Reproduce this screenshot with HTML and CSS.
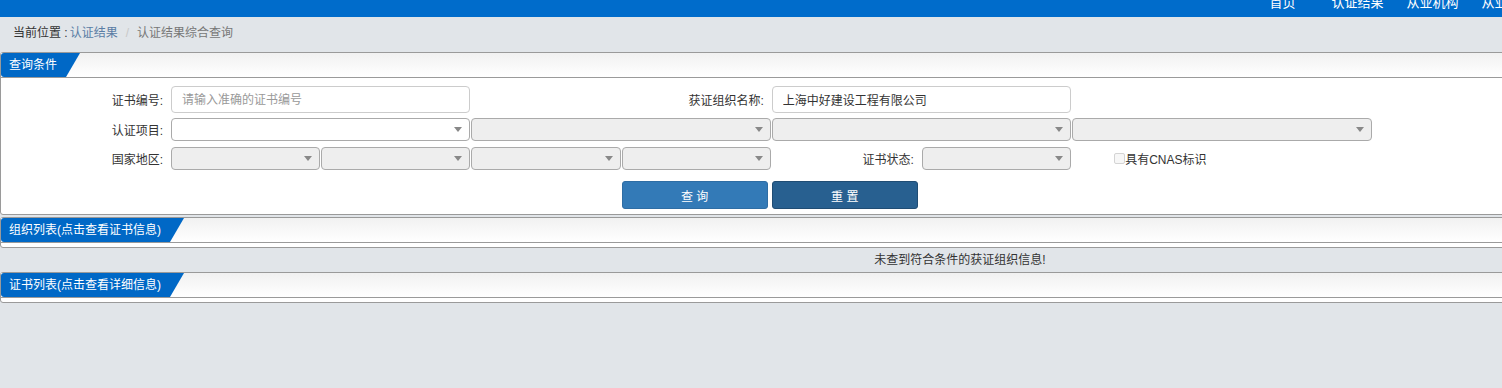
FILE: index.html
```html
<!DOCTYPE html>
<html>
<head>
    <meta charset="utf-8"/>
    <title>认证结果综合查询</title>
    <link rel="stylesheet" href="styles.css">
</head>
<body>
    <div class="topbar">
        <ul class="nav">
            <li>首页</li>
            <li>认证结果</li>
            <li>从业机构</li>
            <li>从业人员</li>
        </ul>
    </div>
    <div class="crumb">
        <span class="here">当前位置 :</span><a class="crumb-link">认证结果</a><span class="sep">/</span><span class="current">认证结果综合查询</span>
    </div>
    <div class="page">
        <div class="panel">
            <div class="panel-head"><span class="tab">查询条件</span></div>
            <div class="panel-body form">
                <div class="row row-1">
                    <label class="lbl">证书编号:</label>
                    <input class="txt span2" type="text" placeholder="请输入准确的证书编号">
                    <label class="lbl span2">获证组织名称:</label>
                    <input class="txt span2" type="text" value="上海中好建设工程有限公司">
                </div>
                <div class="row row-2">
                    <label class="lbl">认证项目:</label>
                    <div class="sel span2 open"><span class="arrow"></span></div>
                    <div class="sel span2"><span class="arrow"></span></div>
                    <div class="sel span2"><span class="arrow"></span></div>
                    <div class="sel span2"><span class="arrow"></span></div>
                </div>
                <div class="row row-3">
                    <label class="lbl">国家地区:</label>
                    <div class="sel"><span class="arrow"></span></div>
                    <div class="sel"><span class="arrow"></span></div>
                    <div class="sel"><span class="arrow"></span></div>
                    <div class="sel"><span class="arrow"></span></div>
                    <label class="lbl">证书状态:</label>
                    <div class="sel"><span class="arrow"></span></div>
                    <label class="check span2"><span class="box"></span>具有CNAS标识</label>
                </div>
                <div class="row row-4">
                    <span class="skip"></span>
                    <button class="btn btn-query">查 询</button>
                    <button class="btn btn-reset">重 置</button>
                </div>
            </div>
        </div>

        <div class="panel">
            <div class="panel-head"><span class="tab">组织列表(点击查看证书信息)</span></div>
            <div class="panel-body empty"></div>
        </div>
        <div class="message">未查到符合条件的获证组织信息!</div>

        <div class="panel">
            <div class="panel-head"><span class="tab">证书列表(点击查看详细信息)</span></div>
            <div class="panel-body empty"></div>
        </div>
    </div>
</body>
</html>
```

FILE: styles.css
```css
body {
    margin: 0;
    font-family: "Liberation Sans", "Noto Sans CJK SC", sans-serif;
    font-size: 12px;
    color: #333;
    background-color: #e1e5e9;
    overflow-x: hidden;
}
.topbar {
    height: 17px;
    background-color: #006ccb;
    overflow: hidden;
}
.nav {
    list-style: none;
    margin: -6px 0 0 1245px;
    padding: 0;
    display: flex;
    width: 300px;
}
.nav li {
    flex: 0 0 75px;
    text-align: center;
    color: white;
    font-size: 13px;
    line-height: 18px;
    white-space: nowrap;
}
.crumb {
    height: 35px;
    line-height: 33px;
    padding-left: 13px;
    white-space: nowrap;
}
.crumb-link {
    color: #5a7da5;
    margin-left: 2px;
}
.sep {
    color: #c8c8c8;
    margin: 0 8px;
}
.current {
    color: #777;
}
.page {
    width: 1920px;
}
.panel {
    background-color: white;
    border: 1px solid #9a9a9a;
    border-radius: 3px;
    margin-bottom: 2px;
}
.panel-head {
    height: 24px;
    border-bottom: 1px solid #9a9a9a;
    background: linear-gradient(#f1f1f1, #fff);
    display: flex;
}
.tab {
    background-color: #0068c6;
    color: white;
    line-height: 24px;
    padding: 0 23px 0 8px;
    border-radius: 3px 0 0 3px;
    clip-path: polygon(0 0, 100% 0, calc(100% - 14px) 100%, 0 100%);
    white-space: nowrap;
}
.panel-body.empty {
    height: 4px;
}
.form {
    padding: 8px 0 5px;
}
.row {
    display: grid;
    grid-template-columns: 170px repeat(8, 150.2px);
    align-items: center;
}
.row-1 { height: 27px; }
.row-2 { height: 23px; margin-top: 5px; }
.row-3 { height: 23px; margin-top: 6px; }
.row-4 { height: 28px; margin-top: 11px; }
.row-4 .skip {
    grid-column: span 4;
}
.span2 {
    grid-column: span 2;
}
.lbl {
    text-align: right;
    padding-right: 8px;
    white-space: nowrap;
}
.txt {
    box-sizing: border-box;
    width: calc(100% - 1px);
    height: 27px;
    margin: 0;
    padding: 0 10px;
    border: 1px solid #ccc;
    border-radius: 4px;
    font-family: inherit;
    font-size: 12px;
    color: #333;
    outline: none;
}
.txt::placeholder {
    color: #999;
}
.sel {
    box-sizing: border-box;
    width: calc(100% - 1px);
    height: 23px;
    border: 1px solid #aaa;
    border-radius: 4px;
    background-color: #eee;
    display: flex;
    justify-content: flex-end;
    align-items: center;
}
.sel.open {
    background-color: white;
}
.arrow {
    width: 0;
    height: 0;
    border-style: solid;
    border-width: 5px 4px 0 4px;
    border-color: #888 transparent transparent transparent;
    margin-right: 7px;
}
.check {
    display: flex;
    align-items: center;
    padding-left: 42px;
    white-space: nowrap;
}
.box {
    box-sizing: border-box;
    width: 11px;
    height: 11px;
    border: 1px solid #d4d4d4;
    border-radius: 2px;
    background-color: #f7f7f7;
}
.btn {
    width: 146px;
    height: 28px;
    border-radius: 3px;
    color: white;
    font-family: inherit;
    font-size: 12px;
    cursor: pointer;
    padding: 0;
}
.btn-query {
    background-color: #337ab7;
    border: 1px solid #2e6da4;
}
.btn-reset {
    background-color: #286090;
    border: 1px solid #204d74;
}
.message {
    height: 22px;
    line-height: 20px;
    text-align: center;
}
```
